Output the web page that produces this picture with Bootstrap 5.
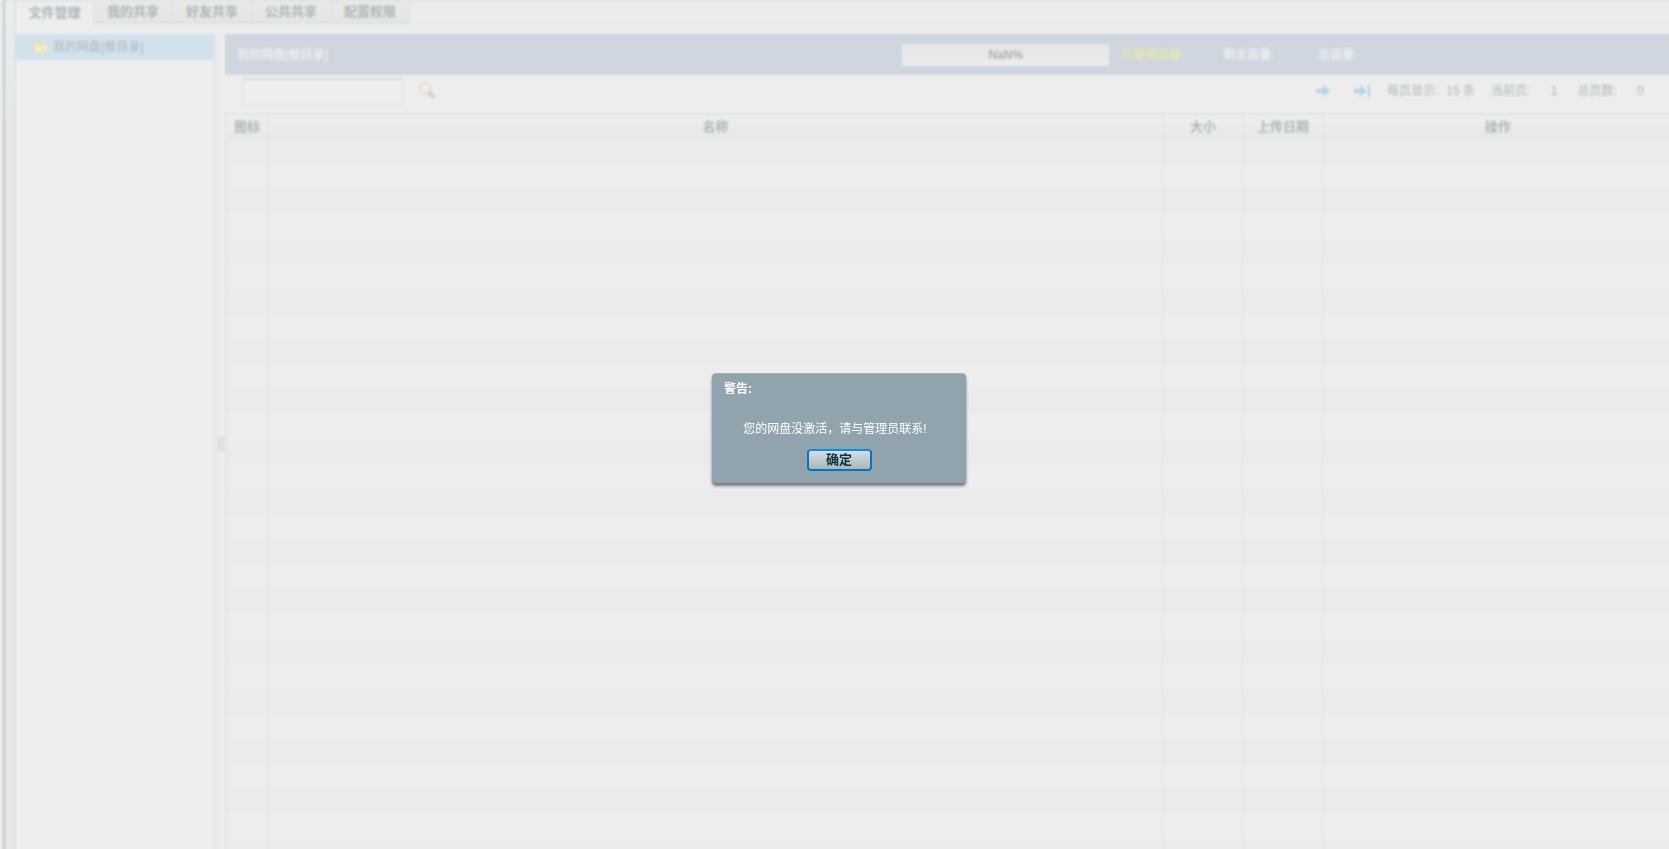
<!DOCTYPE html>
<html lang="zh-CN">
<head>
<meta charset="utf-8">
<meta name="viewport" content="width=device-width, initial-scale=1">
<title>我的网盘</title>
<link href="https://cdn.jsdelivr.net/npm/bootstrap@5.3.0/dist/css/bootstrap.min.css" rel="stylesheet">
<style>
body{font:12px/16px "Liberation Sans","Noto Sans CJK SC",sans-serif;background:#ededed;color:#aeb9b9;overflow:hidden}
.disk-app{height:calc(100vh + 4px);border-left:2px solid #b8cdcd;border-top:1px solid #d3d9de;margin:0 -5px 0 3px;filter:blur(1px)}
.edge-strip{width:11px;background:linear-gradient(#ededed,#e7e7e7 120px);border-right:2px solid #e0e1e1}
.tab-row{height:24px;border-bottom:2px solid #e5e9e8;background:#ebeded}
.tab-row .nav-link{width:79px;height:22px;padding:0;font:bold 13px/18px "Liberation Sans","Noto Sans CJK SC",sans-serif;color:#adb8b8;border:0;border-right:1px solid #dcdede;border-bottom:1px solid #dcdede;border-radius:0;background:linear-gradient(#e9e9e9,#e4e5e5)}
.tab-row .nav-link.active{width:78px;height:24px;line-height:20px;background:#ededed;color:#adb8b8;border-bottom:0}
.work-area{padding-top:9px}
.folder-tree{width:200px;border-right:2px solid #e4e4e4}
.tree-node{height:26px;padding-left:17px;background:#d2e2ec;color:#adb6c0;text-decoration:none}
.splitter{width:9px}
.grip{width:6px;height:16px;border:solid #dadada;border-width:0 2px;background:#e6e6e6}
.title-bar{height:41px;padding-left:12px;background:#d0d6e0;color:#f4f5f7}
.usage{width:772px}
.quota{width:207px;height:22px;background:linear-gradient(#e6e6e6,#ececec);color:#adb6b6;font-weight:bold;border-radius:0}
.used{width:106px;color:#e9ee96}
.remaining{width:95px}
.tool-row{height:38px;padding:3px 0 0 18px}
.search-box{width:160px;height:27px;border:1px solid #dfe0e0;border-top:2px solid #dadada;border-radius:0;background:#eee;padding:2px 4px;font-size:12px}
.pager{width:358px;height:26px;white-space:nowrap}
.page-no{width:27px}
.icon-btn{padding:0;border:0;background:none;line-height:0}
.file-table{table-layout:fixed;width:100%;border-left:2px solid #e4e4e4;border-top:2px solid #e3e4e4}
.file-table th,.file-table td{height:25px;padding:0;border-right:2px solid #e6e7e7;text-align:center}
.file-table th{font-size:13px;color:#adb8b8;background:linear-gradient(#eee,#e8e8e8);border-bottom:2px solid #e3e4e4}
.file-table tbody tr:nth-child(odd){background:#ebebeb}
.alert-layer{padding:6px 0 0 9px}
.alert-layer .modal-dialog{width:254px;margin:0 auto;min-height:100%}
.alert-layer .modal-content{height:110px;border:0;border-top:1px solid #a5b6be;border-radius:4px;background:#91a4ad;color:#fff;box-shadow:0 3px 3px #777}
.alert-layer h1{font:bold 12px/16px "Liberation Sans","Noto Sans CJK SC",sans-serif;padding:7px 12px 0}
.ok-btn{width:65px;height:22px;padding:0;margin-top:12px;border:2px solid #0078c8;border-top-color:#0090f0;border-radius:4px;background:linear-gradient(#d8dee1,#aab5bb);color:#0b333c;font:bold 13px/16px "Liberation Sans","Noto Sans CJK SC",sans-serif}
</style>
</head>
<body>
<div class="disk-app d-flex overflow-hidden">
  <div class="edge-strip flex-shrink-0"></div>
  <div class="flex-grow-1 d-flex flex-column overflow-hidden">
    <nav class="nav tab-row flex-shrink-0">
      <button class="nav-link active" type="button">文件管理</button>
      <button class="nav-link" type="button">我的共享</button>
      <button class="nav-link" type="button">好友共享</button>
      <button class="nav-link" type="button">公共共享</button>
      <button class="nav-link" type="button">配置权限</button>
    </nav>
    <div class="work-area d-flex flex-grow-1 overflow-hidden">
      <aside class="folder-tree flex-shrink-0">
        <a class="tree-node d-flex align-items-center" href="#">
          <svg class="me-1" width="16" height="14" viewBox="0 0 16 14" aria-hidden="true"><path d="M1 3q0-2 2-2h3l2 2h5q2 0 2 2v6q0 2-2 2H3q-2 0-2-2z" fill="#e9e4c3" stroke="#e3d9b8"/><path d="M2 6h12v5q0 1-1 1H3q-1 0-1-1z" fill="#eeebcf"/></svg>
          <span>我的网盘[根目录]</span>
        </a>
      </aside>
      <div class="splitter flex-shrink-0 d-flex align-items-center justify-content-center"><span class="grip"></span></div>
      <main class="flex-grow-1 overflow-hidden">
        <div class="title-bar d-flex align-items-center">
          <span>我的网盘[根目录]</span>
          <div class="usage ms-auto d-flex align-items-center flex-shrink-0">
            <div class="quota d-flex align-items-center justify-content-center me-2" role="progressbar" aria-label="容量">NaN%</div>
            <span class="used ps-1">已使用容量:</span>
            <span class="remaining">剩余容量:</span>
            <span>总容量:</span>
          </div>
        </div>
        <div class="tool-row d-flex align-items-start">
          <input class="search-box" type="text" aria-label="搜索">
          <button class="icon-btn ms-3 mt-1" type="button" aria-label="查找"><svg width="16" height="17" viewBox="0 0 16 17"><circle cx="6.5" cy="6.5" r="5" fill="#efefef" stroke="#e2d9d2" stroke-width="2"/><path d="M10.5 11l3.5 3.5" stroke="#dccfbf" stroke-width="4" stroke-linecap="round"/></svg></button>
          <div class="pager ms-auto d-flex align-items-center flex-shrink-0">
            <button class="icon-btn me-4" type="button" aria-label="下一页"><svg width="14" height="14" viewBox="0 0 14 14"><path d="M0 5h7V1l7 6-7 6V9H0z" fill="#b4d4e9"/></svg></button>
            <button class="icon-btn me-3" type="button" aria-label="末页"><svg width="17" height="14" viewBox="0 0 17 14"><path d="M0 5h6V1l7 6-7 6V9H0zM14 1h2v12h-2z" fill="#b4d4e9"/></svg></button>
            <span class="me-2">每页显示:</span><span class="me-3">15 条</span>
            <span>当前页:</span><span class="page-no text-end me-3">1</span>
            <span class="ms-1">总页数:</span><span class="page-no text-end">0</span>
          </div>
        </div>
        <table class="file-table">
          <colgroup><col style="width:42px"><col><col style="width:80px"><col style="width:80px"><col style="width:350px"></colgroup>
          <thead><tr><th>图标</th><th>名称</th><th>大小</th><th>上传日期</th><th>操作</th></tr></thead>
          <tbody id="fileRows"></tbody>
        </table>
      </main>
    </div>
  </div>
</div>
<div class="modal alert-layer d-block" tabindex="-1" role="alertdialog" aria-labelledby="alertTitle" aria-describedby="alertText">
  <div class="modal-dialog modal-dialog-centered">
    <div class="modal-content">
      <h1 id="alertTitle" class="mb-0">警告:</h1>
      <p id="alertText" class="text-center mt-4 mb-0 pe-2">您的网盘没激活，请与管理员联系!</p>
      <button class="ok-btn mx-auto" type="button">确定</button>
    </div>
  </div>
</div>
<script src="https://cdn.jsdelivr.net/npm/bootstrap@5.3.0/dist/js/bootstrap.bundle.min.js"></script>
<script>
  const rows = document.getElementById('fileRows');
  for (let i = 0; i < 40; i++) {
    const row = rows.insertRow();
    for (let c = 0; c < 5; c++) row.insertCell();
  }
</script>
</body>
</html>
